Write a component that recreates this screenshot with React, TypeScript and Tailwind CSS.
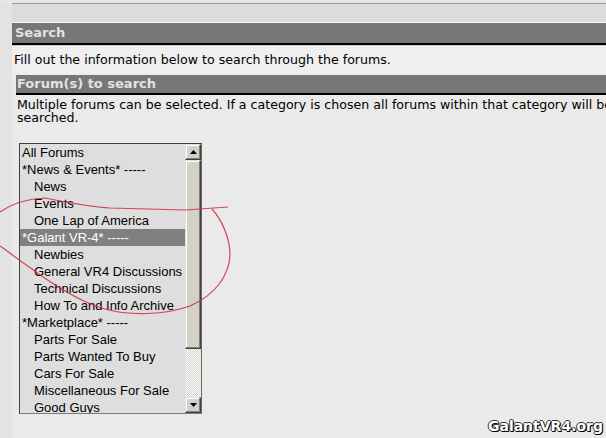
const forums: { label: string; indent?: boolean; selected?: boolean }[] = [
  { label: 'All Forums' },
  { label: '*News & Events* -----' },
  { label: 'News', indent: true },
  { label: 'Events', indent: true },
  { label: 'One Lap of America', indent: true },
  { label: '*Galant VR-4* -----', selected: true },
  { label: 'Newbies', indent: true },
  { label: 'General VR4 Discussions', indent: true },
  { label: 'Technical Discussions', indent: true },
  { label: 'How To and Info Archive', indent: true },
  { label: '*Marketplace* -----' },
  { label: 'Parts For Sale', indent: true },
  { label: 'Parts Wanted To Buy', indent: true },
  { label: 'Cars For Sale', indent: true },
  { label: 'Miscellaneous For Sale', indent: true },
  { label: 'Good Guys', indent: true },
];

function ScrollButton({ down }: { down?: boolean }) {
  return (
    <div className="h-[16px] w-[16px] bg-[#d4d0c8] border-t border-l border-t-[#dfdfdf] border-l-[#dfdfdf] border-b border-r border-b-[#404040] border-r-[#404040] shadow-[inset_-1px_-1px_#808080,inset_1px_1px_#ffffff] flex items-center justify-center">
      <svg width="7" height="4" viewBox="0 0 7 4">
        {down ? <path d="M0 0H7L3.5 4Z" fill="#000" /> : <path d="M0 4H7L3.5 0Z" fill="#000" />}
      </svg>
    </div>
  );
}

function ForumList() {
  return (
    <div className="ml-[3px] mt-[19px] w-[183px] h-[271px] border border-t-[#404040] border-l-[#404040] border-r-[#6a6a6a] border-b-[#7a7a7a] bg-[#dedede] flex font-['Liberation_Sans',Arial,sans-serif] text-[13px] text-black">
      <div className="flex-1 overflow-hidden">
        {forums.map((f) => (
          <div
            key={f.label}
            className={`h-[17px] leading-[17px] whitespace-nowrap ${f.indent ? 'pl-[14px]' : 'pl-[2px]'} ${f.selected ? 'bg-[#808080] text-white' : ''}`}
          >
            {f.label}
          </div>
        ))}
      </div>
      <div className="w-[16px] flex flex-col">
        <ScrollButton />
        <div className="h-[189px] bg-[#d4d0c8] border-t border-l border-t-[#dfdfdf] border-l-[#dfdfdf] border-b border-r border-b-[#404040] border-r-[#404040] shadow-[inset_-1px_-1px_#808080,inset_1px_1px_#ffffff]" />
        <div className="flex-1 [background:repeating-conic-gradient(#d4d0c8_0%_25%,#ffffff_0%_50%)_0_0/2px_2px]" />
        <ScrollButton down />
      </div>
    </div>
  );
}

export default function App() {
  return (
    <div className="relative w-[606px] h-[438px] overflow-hidden bg-[#e3e3e3] font-['DejaVu_Sans',Verdana,sans-serif] text-black">
      <div className="h-[3px] bg-[#e6e6e6]" />
      <div className="ml-[12px] w-[700px]">
        <div className="h-[20px] bg-[#dcdcdc] border-t border-t-[#9a9a9a] border-b border-b-[#f4f4f4]" />
        <div className="h-[22px] bg-[#777777] border-b-2 border-black pl-[3px] text-[13px] font-bold leading-[20px] text-[#e2e2e2]">
          Search
        </div>
        <div className="h-[1px] bg-[#cbcbcb]" />
        <div className="h-[28px] bg-[#efefef] pl-[2px] text-[12.6px] flex items-center">
          Fill out the information below to search through the forums.
        </div>
        <div className="bg-[#eaeaea] pl-[4px] pt-[1px] h-[400px]">
          <div className="w-[640px]">
            <div className="h-[20px] bg-[#777777] border-b-2 border-black pl-[1px] text-[13px] font-bold leading-[18px] text-[#e2e2e2]">
              Forum(s) to search
            </div>
            <p className="mt-[3px] pl-[1px] pr-[8px] text-[12.6px] leading-[13px]">
              Multiple forums can be selected. If a category is chosen all forums within that category will be searched.
            </p>
            <ForumList />
          </div>
        </div>
      </div>

      <svg className="absolute inset-0 pointer-events-none" width="606" height="438" viewBox="0 0 606 438">
        <path
          d="M0 212 C10 205 25 199 45 198 C70 203 90 207 110 208 L185 210 L228 207 M212 209 C222 220 230 238 230 255 C229 276 215 295 190 306 C165 315 130 316 105 309 C80 302 55 286 32 269 C16 258 6 250 0 246"
          fill="none"
          stroke="#d0283c"
          strokeWidth="1.2"
          strokeOpacity="0.85"
        />
      </svg>

      <div className="absolute right-[3px] bottom-[4px] font-['DejaVu_Sans',Verdana,sans-serif] text-[14px] font-bold leading-[16px] text-white [text-shadow:1px_1px_0_#000,-1px_0_0_#333,0_-1px_0_#333,1px_0_0_#333,0_1px_0_#333]">
        GalantVR4.org
      </div>
    </div>
  );
}
